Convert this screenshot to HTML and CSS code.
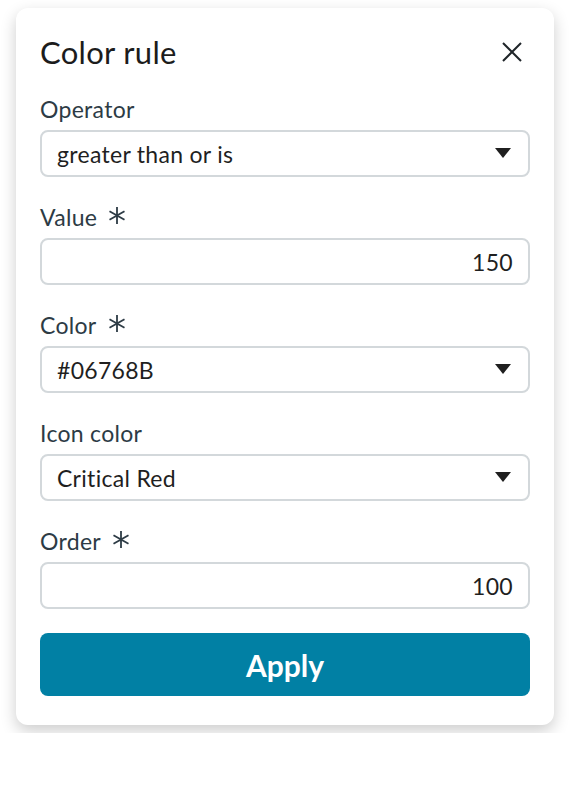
FILE: index.html
```html
<!DOCTYPE html>
<html lang="en">
<head>
    <meta charset="UTF-8">
    <meta name="viewport" content="width=device-width, initial-scale=1.0">
    <title>Color rule</title>
    <link rel="stylesheet" href="styles.css">
</head>
<body>
    <div class="rule-card">
        <div class="rule-header">
            <h1>Color rule</h1>
            <button class="close-btn" aria-label="Close">
                <svg width="20" height="20" viewBox="0 0 20 20"><path d="M1 1 L19 19 M19 1 L1 19" stroke="#1f2529" stroke-width="2" fill="none"/></svg>
            </button>
        </div>

        <div class="fields">
            <div class="field">
                <label>Operator</label>
                <div class="select-wrap">
                    <select>
                        <option>greater than or is</option>
                    </select>
                    <svg class="caret" width="16" height="10" viewBox="0 0 16 10"><path d="M0 0 H16 L8 10 Z" fill="#1f1f1f"/></svg>
                </div>
            </div>

            <div class="field">
                <label>Value <svg class="req" width="18" height="17" viewBox="0 0 18 17"><path d="M9 0 V17 M1.5 4.2 L16.5 12.8 M16.5 4.2 L1.5 12.8" stroke="#2d3b45" stroke-width="1.8" fill="none"/></svg></label>
                <input type="text" class="num" value="150">
            </div>

            <div class="field">
                <label>Color <svg class="req" width="18" height="17" viewBox="0 0 18 17"><path d="M9 0 V17 M1.5 4.2 L16.5 12.8 M16.5 4.2 L1.5 12.8" stroke="#2d3b45" stroke-width="1.8" fill="none"/></svg></label>
                <div class="select-wrap">
                    <select>
                        <option>#06768B</option>
                    </select>
                    <svg class="caret" width="16" height="10" viewBox="0 0 16 10"><path d="M0 0 H16 L8 10 Z" fill="#1f1f1f"/></svg>
                </div>
            </div>

            <div class="field">
                <label>Icon color</label>
                <div class="select-wrap">
                    <select>
                        <option>Critical Red</option>
                    </select>
                    <svg class="caret" width="16" height="10" viewBox="0 0 16 10"><path d="M0 0 H16 L8 10 Z" fill="#1f1f1f"/></svg>
                </div>
            </div>

            <div class="field">
                <label>Order <svg class="req" width="18" height="17" viewBox="0 0 18 17"><path d="M9 0 V17 M1.5 4.2 L16.5 12.8 M16.5 4.2 L1.5 12.8" stroke="#2d3b45" stroke-width="1.8" fill="none"/></svg></label>
                <input type="text" class="num" value="100">
            </div>
        </div>

        <button class="apply-btn">Apply</button>
    </div>
</body>
</html>
```

FILE: styles.css
```css
body {
    font-family: Lato, "Noto Sans", sans-serif;
    background-color: #fff;
    margin: 0;
    padding: 8px 16px;
}
.rule-card {
    width: 538px;
    box-sizing: border-box;
    background: #fff;
    padding: 26px 24px 29px;
    border-radius: 12px;
    box-shadow: 0 6px 16px rgba(0, 0, 0, 0.2);
}
.rule-header {
    display: flex;
    justify-content: space-between;
    align-items: center;
    height: 36px;
    margin-bottom: 25px;
}
h1 {
    margin: 0;
    font-size: 31px;
    font-weight: 400;
    line-height: 36px;
    letter-spacing: 0.3px;
    color: #1c1c1c;
}
.close-btn {
    width: 36px;
    height: 36px;
    padding: 0;
    border: none;
    background: none;
    display: flex;
    align-items: center;
    justify-content: center;
    cursor: pointer;
}
.fields {
    display: flex;
    flex-direction: column;
    gap: 26px;
}
.field label {
    display: flex;
    align-items: center;
    gap: 11px;
    font-size: 23px;
    line-height: 28px;
    letter-spacing: 0.3px;
    color: #2d3b45;
    margin-bottom: 7px;
}
.req {
    margin-top: -4px;
}
input,
select {
    display: block;
    width: 100%;
    height: 47px;
    box-sizing: border-box;
    border: 2px solid #d3d8db;
    border-radius: 8px;
    background: #fff;
    padding: 0 15px;
    font-family: inherit;
    font-size: 23px;
    letter-spacing: 0.3px;
    color: #1f1f1f;
    outline: none;
}
select {
    appearance: none;
    -webkit-appearance: none;
}
.num {
    text-align: right;
    padding-right: 15px;
}
.select-wrap {
    position: relative;
}
.caret {
    position: absolute;
    right: 19px;
    top: 18px;
    pointer-events: none;
}
.apply-btn {
    display: block;
    width: 100%;
    height: 63px;
    margin-top: 24px;
    border: none;
    border-radius: 8px;
    background-color: #0180a4;
    color: #fff;
    font-family: inherit;
    font-size: 30px;
    font-weight: 700;
    cursor: pointer;
}
```
